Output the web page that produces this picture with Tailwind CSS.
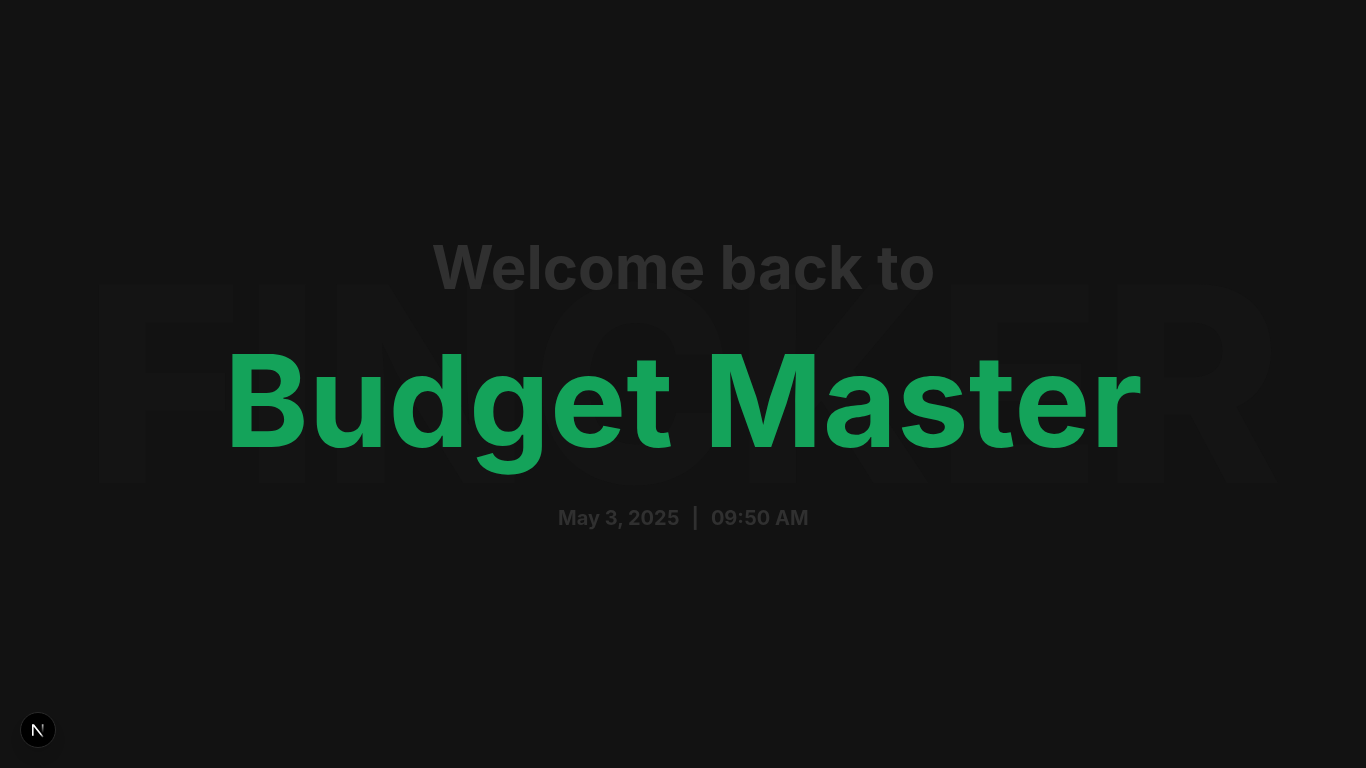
<!DOCTYPE html>
<html lang="en">
<head>
<meta charset="utf-8">
<meta name="viewport" content="width=device-width, initial-scale=1">
<title>Fincker</title>
<script src="https://cdn.jsdelivr.net/npm/@tailwindcss/browser@4"></script>
</head>
<body class="bg-[#121212] font-['Inter',sans-serif] font-bold">
<main class="relative flex min-h-screen flex-col items-center justify-center overflow-hidden">
  <div aria-hidden="true" class="absolute inset-0 flex items-center justify-center text-[20vw] leading-none font-extrabold text-[#141414] select-none">FINCKER</div>
  <div class="relative flex flex-col items-center gap-10 text-center will-change-transform">
    <h2 class="text-6xl leading-none text-[#303030]">Welcome back to</h2>
    <h1 class="text-9xl leading-none text-[#14a35a]">Budget Master</h1>
    <p class="flex gap-3 text-xl leading-[26px] text-[#303030]"><span>May 3, 2025</span><span>|</span><span>09:50 AM</span></p>
  </div>
</main>
<button type="button" aria-label="Open Next.js Dev Tools" class="fixed bottom-5 left-5 flex size-9 items-center justify-center rounded-full border border-[#2a2a2a] bg-black shadow-lg">
  <svg class="size-9 shrink-0" viewBox="0 0 36 36" fill="none">
    <defs>
      <linearGradient id="diag" x1="19" y1="18" x2="24" y2="25" gradientUnits="userSpaceOnUse"><stop stop-color="#fff"/><stop offset="0.5" stop-color="#fff"/><stop offset="1" stop-color="#fff" stop-opacity="0.2"/></linearGradient>
      <linearGradient id="stem" x1="22" y1="12" x2="22" y2="21" gradientUnits="userSpaceOnUse"><stop stop-color="#fff" stop-opacity="0.8"/><stop offset="1" stop-color="#fff" stop-opacity="0"/></linearGradient>
    </defs>
    <path d="M12 12.3H14L23.6 24.5L22.4 25.6L13.6 14.6V23.8H12Z" fill="url(#diag)"/>
    <path d="M21.8 12.3H23.5V21H21.8Z" fill="url(#stem)"/>
  </svg>
</button>
</body>
</html>
